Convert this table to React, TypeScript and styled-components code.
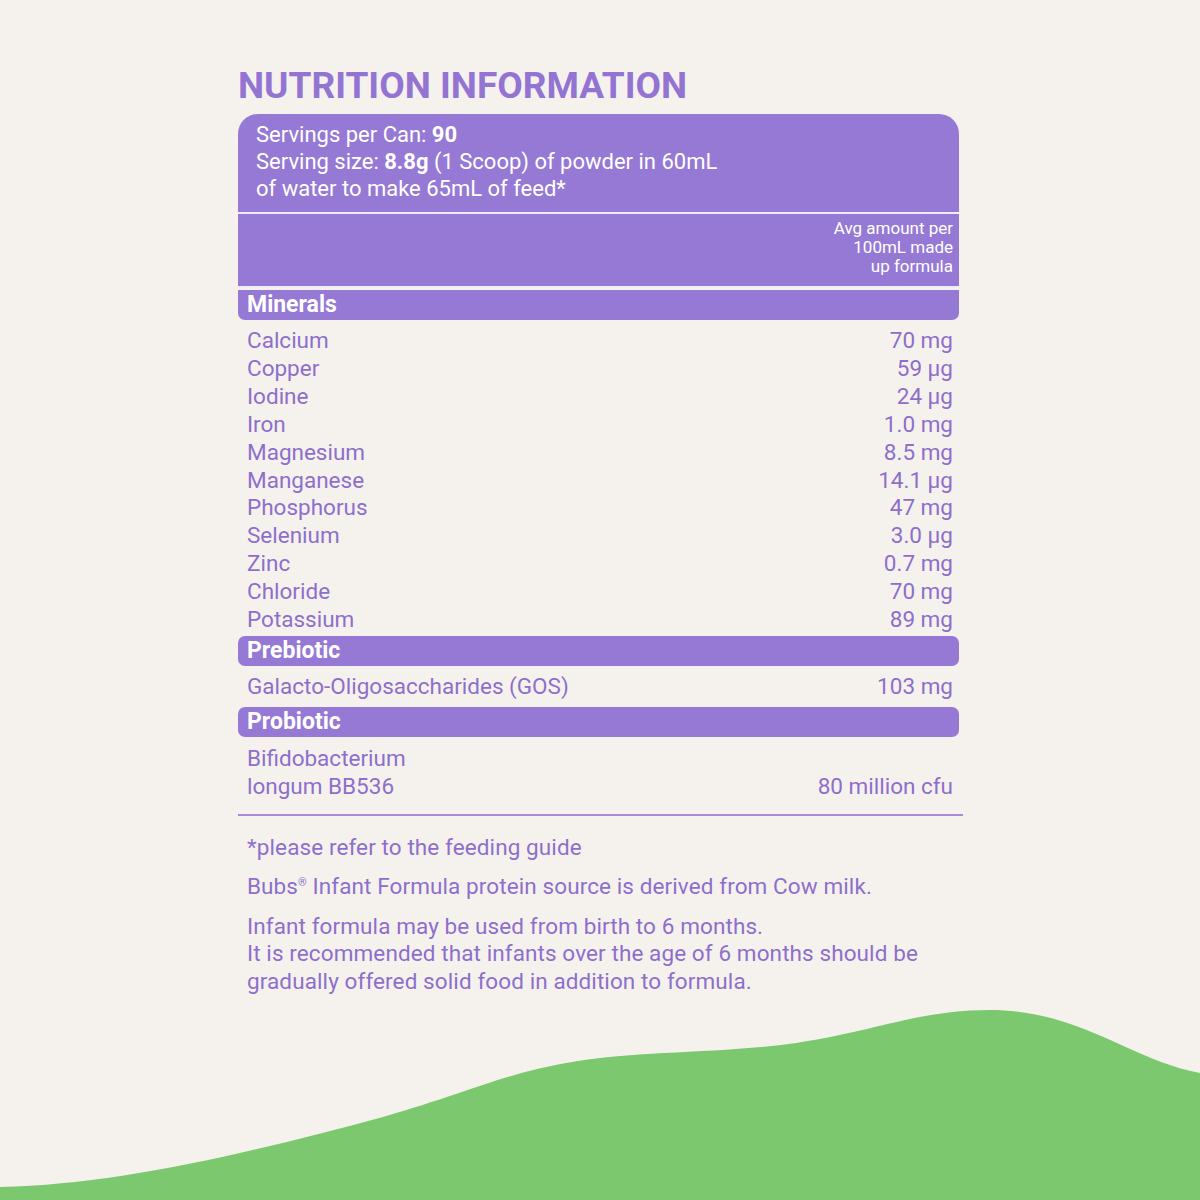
import styled, { createGlobalStyle } from "styled-components";

const GlobalStyle = createGlobalStyle`
  html, body {
    margin: 0;
    padding: 0;
    background: #f5f2ee;
  }
  body {
    font-family: Roboto, "Noto Sans", sans-serif;
  }
`;

const Page = styled.div`
  position: relative;
  width: 1200px;
  height: 1200px;
  overflow: hidden;
  background: #f5f2ee;
`;

const Wave = styled.svg`
  position: absolute;
  left: 0;
  bottom: 0;
  width: 1200px;
  height: 200px;
  display: block;
`;

const Panel = styled.div`
  position: relative;
  width: 721px;
  margin-left: 238px;
  padding-top: 66px;
`;

const Title = styled.h1`
  margin: 0 0 8px;
  font-size: 37px;
  line-height: 40px;
  font-weight: 700;
  color: #9474d2;
`;

const HeaderBox = styled.div`
  background: #9679d4;
  border-radius: 20px 20px 0 0;
  color: #ffffff;
`;

const ServingInfo = styled.div`
  padding: 7px 18px 10px;
  font-size: 22px;
  line-height: 27px;
  height: 81px;

  b {
    font-weight: 700;
  }
`;

const Rule = styled.div`
  height: 2px;
  background: #f0ebf6;
`;

const AvgCol = styled.div`
  padding: 5px 6px 0 0;
  height: 67px;
  text-align: right;
  font-size: 17px;
  line-height: 19px;
  color: #ffffff;
`;

const SectionBar = styled.div<{ $first?: boolean }>`
  margin-top: 2px;
  height: 30px;
  background: #9679d4;
  border-radius: ${(p) => (p.$first ? "0 0 7px 7px" : "7px")};
  color: #ffffff;
  font-size: 23px;
  font-weight: 700;
  line-height: 30px;
  padding-left: 9px;
`;

const Rows = styled.div<{ $pt: number; $pb: number }>`
  padding: ${(p) => p.$pt}px 6px ${(p) => p.$pb}px 9px;
`;

const Row = styled.div`
  display: flex;
  justify-content: space-between;
  align-items: flex-end;
  font-size: 22.5px;
  line-height: 27.9px;
  color: #8d6fcb;
`;

const Divider = styled.div`
  margin-top: 1px;
  width: 725px;
  height: 2px;
  background: #a68bd8;
`;

const Notes = styled.div`
  padding: 18px 0 0 9px;
  color: #8d6fcb;
  font-size: 22.5px;
  line-height: 27.5px;
  letter-spacing: 0.1px;

  p {
    margin: 0 0 12px;
  }
  sup {
    font-size: 11px;
    vertical-align: 8px;
    line-height: 0;
  }
`;

const minerals: [string, string][] = [
  ["Calcium", "70 mg"],
  ["Copper", "59 µg"],
  ["Iodine", "24 µg"],
  ["Iron", "1.0 mg"],
  ["Magnesium", "8.5 mg"],
  ["Manganese", "14.1 µg"],
  ["Phosphorus", "47 mg"],
  ["Selenium", "3.0 µg"],
  ["Zinc", "0.7 mg"],
  ["Chloride", "70 mg"],
  ["Potassium", "89 mg"],
];

export default function App() {
  return (
    <Page>
      <GlobalStyle />
      <Wave viewBox="0 0 1200 200" preserveAspectRatio="none">
        <path
          d="M0 187 C 120 185, 260 150, 383 117 C 470 92, 500 75, 566 63 C 640 50, 720 54, 796 43 C 880 30, 920 10, 990 10 C 1080 10, 1130 60, 1200 73 L 1200 200 L 0 200 Z"
          fill="#7bc86f"
        />
      </Wave>
      <Panel>
        <Title>NUTRITION INFORMATION</Title>
        <HeaderBox>
          <ServingInfo>
            Servings per Can: <b>90</b>
            <br />
            Serving size: <b>8.8g</b> (1 Scoop) of powder in 60mL
            <br />
            of water to make 65mL of feed*
          </ServingInfo>
          <Rule />
          <AvgCol>
            Avg amount per
            <br />
            100mL made
            <br />
            up formula
          </AvgCol>
        </HeaderBox>
        <Rule />
        <SectionBar $first>Minerals</SectionBar>
        <Rows $pt={7} $pb={0}>
          {minerals.map(([name, amount]) => (
            <Row key={name}>
              <span>{name}</span>
              <span>{amount}</span>
            </Row>
          ))}
        </Rows>
        <SectionBar>Prebiotic</SectionBar>
        <Rows $pt={7} $pb={4}>
          <Row>
            <span>Galacto-Oligosaccharides (GOS)</span>
            <span>103 mg</span>
          </Row>
        </Rows>
        <SectionBar>Probiotic</SectionBar>
        <Rows $pt={8} $pb={12}>
          <Row>
            <span>
              Bifidobacterium
              <br />
              longum BB536
            </span>
            <span>80 million cfu</span>
          </Row>
        </Rows>
        <Divider />
        <Notes>
          <p>*please refer to the feeding guide</p>
          <p>
            Bubs<sup>®</sup> Infant Formula protein source is derived from Cow milk.
          </p>
          <p>
            Infant formula may be used from birth to 6 months.
            <br />
            It is recommended that infants over the age of 6 months should be
            <br />
            gradually offered solid food in addition to formula.
          </p>
        </Notes>
      </Panel>
    </Page>
  );
}
